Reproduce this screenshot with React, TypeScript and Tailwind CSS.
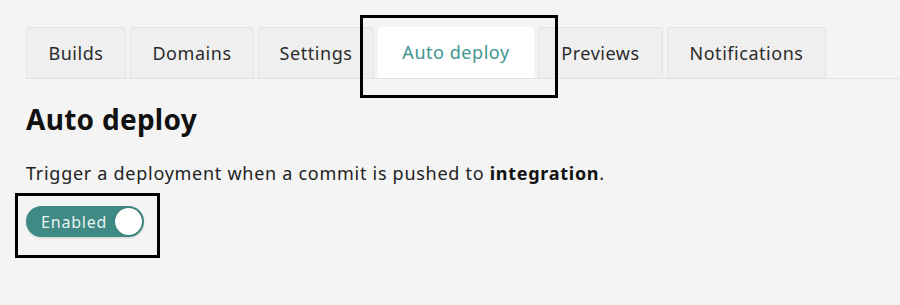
import React from "react";

const tabs = [
  { label: "Builds", w: "w-[100px]" },
  { label: "Domains", w: "w-[124px]" },
  { label: "Settings", w: "w-[116px]" },
  { label: "Auto deploy", w: "w-[156px]", active: true },
  { label: "Previews", w: "w-[125px]" },
  { label: "Notifications", w: "w-[159px]" },
];

export default function App() {
  return (
    <div
      className="relative w-[900px] h-[305px] bg-[#f4f4f4] text-[#222] overflow-hidden"
      style={{ fontFamily: "'Noto Sans', 'Open Sans', sans-serif" }}
    >
      <div className="pl-[26px] pt-[27px]">
        <div className="flex gap-[4px] border-b border-[#e2e2e2] h-[52px]">
          {tabs.map((t) =>
            t.active ? (
              <div
                key={t.label}
                className={`${t.w} h-[51px] bg-white rounded-t-[4px] flex items-center justify-center text-[18px] tracking-[0.03em] text-[#3e9690]`}
              >
                {t.label}
              </div>
            ) : (
              <div
                key={t.label}
                className={`${t.w} h-[51px] bg-[#efefef] border border-b-0 border-[#e2e2e2] rounded-t-[4px] flex items-center justify-center text-[18px] tracking-[0.03em] text-[#2b2b2b]`}
              >
                {t.label}
              </div>
            )
          )}
        </div>
        <h1 className="mt-[22px] text-[28px] font-bold leading-[36px] tracking-[0.01em] text-[#111]">Auto deploy</h1>
        <p className="mt-[24px] text-[18px] leading-[24px] tracking-[0.04em] text-[#222]">
          Trigger a deployment when a commit is pushed to <b className="font-bold text-[#111]">integration</b>.
        </p>
        <div className="mt-[21px] w-[118px] h-[31px] rounded-full bg-[#3f8a85] flex items-center justify-between pl-[15px] pr-[2px] shadow-[0_1px_2px_rgba(0,0,0,0.15)]">
          <span className="text-[16px] tracking-[0.05em] text-[#e8f3f1]">Enabled</span>
          <span className="w-[27px] h-[27px] rounded-full bg-white shadow-[0_0_2px_rgba(0,0,0,0.3)]" />
        </div>
      </div>
      <div className="absolute left-[360px] top-[15px] w-[198px] h-[83px] border-[3px] border-black" />
      <div className="absolute left-[15px] top-[193px] w-[145px] h-[65px] border-[3px] border-black" />
    </div>
  );
}
